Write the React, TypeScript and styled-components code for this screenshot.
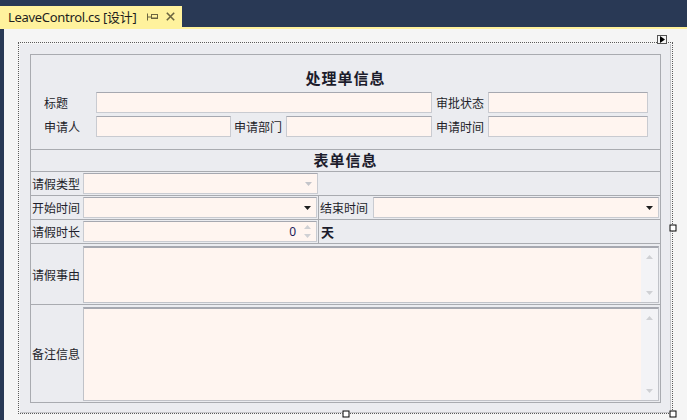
import styled, { createGlobalStyle } from 'styled-components';

const GlobalStyle = createGlobalStyle`
  html, body {
    margin: 0;
    padding: 0;
    background: #293955;
  }
  body {
    font-family: "Noto Sans CJK SC", "Noto Sans", sans-serif;
    color: #1e1e1e;
  }
`;

const Page = styled.div`
  width: 687px;
  height: 420px;
  display: flex;
  flex-direction: column;
  background: #293955;
  overflow: hidden;
`;

const TabStrip = styled.div`
  height: 21px;
  padding-top: 6px;
  display: flex;
`;

const Tab = styled.div`
  width: 182px;
  background: #fff29d;
  display: flex;
  align-items: center;
  padding-left: 8px;
  box-sizing: border-box;
  font-family: "Noto Sans", "Noto Sans CJK SC", sans-serif;
  font-size: 13px;
  color: #1e1e1e;
`;

const TabTitle = styled.span`
  letter-spacing: -0.3px;
  margin-top: -1px;
`;

const TabIcons = styled.div`
  display: flex;
  align-items: center;
  gap: 8px;
  margin-left: 11px;
`;

const YellowRule = styled.div`
  height: 2px;
  background: #fff29d;
`;

const Workspace = styled.div`
  flex: 1;
  margin-left: 4px;
  background: #f5f5f5;
  padding: 13px 0 0 14px;
`;

const SelectionFrame = styled.div`
  position: relative;
  width: 655px;
  height: 372px;
  box-sizing: border-box;
  border: 1px dotted #5a5a5a;
  padding: 1px 0 0 1px;
`;

const Handle = styled.div<{ $x: string; $y: string }>`
  position: absolute;
  width: 7px;
  height: 7px;
  box-sizing: border-box;
  background: #fff;
  border: 1px solid #000;
  left: ${({ $x }) => $x};
  top: ${({ $y }) => $y};
  transform: translate(-50%, -50%);
`;

const SmartTag = styled.div`
  position: absolute;
  right: 5px;
  top: -8px;
  width: 10px;
  height: 9px;
  box-sizing: border-box;
  border: 1px solid #555;
  background: #f5f5f5;
  display: flex;
  align-items: center;
  justify-content: center;
`;

const UserControl = styled.div`
  width: 651px;
  height: 369px;
  box-sizing: border-box;
  background: #ebecf0;
  border-right: 1px solid #c4c5c9;
  border-bottom: 1px solid #c4c5c9;
  padding: 10px 9px 9px 10px;
`;

const Group = styled.div`
  height: 100%;
  box-sizing: border-box;
  border: 1px solid #a9abb0;
  display: flex;
  flex-direction: column;
`;

const Section = styled.div<{ $h: number }>`
  height: ${({ $h }) => $h}px;
  box-sizing: border-box;
  border-bottom: 1px solid #a9abb0;
  flex: none;
`;

const HeaderSection = styled(Section)`
  padding-top: 14px;
  display: flex;
  flex-direction: column;
`;

const Title = styled.div<{ $top?: number }>`
  text-align: center;
  font-size: 15px;
  font-weight: 700;
  line-height: 18px;
  letter-spacing: 1px;
  color: #1c1c2c;
  margin-top: ${({ $top }) => $top ?? 0}px;
`;

const InfoRow = styled.div<{ $top: number }>`
  display: flex;
  align-items: center;
  height: 21px;
  padding-left: 13px;
  margin-top: ${({ $top }) => $top}px;
`;

const Label = styled.div<{ $w: number; $pad?: number }>`
  width: ${({ $w }) => $w}px;
  padding-left: ${({ $pad }) => $pad ?? 0}px;
  box-sizing: border-box;
  font-size: 12px;
  line-height: 16px;
  white-space: nowrap;
  flex: none;
  color: #1e1e2a;
`;

const TextBox = styled.div<{ $w?: number }>`
  width: ${({ $w }) => ($w ? `${$w}px` : 'auto')};
  flex: ${({ $w }) => ($w ? 'none' : 1)};
  height: 21px;
  box-sizing: border-box;
  background: #fff5f0;
  border: 1px solid #c9cbd1;
  border-top-color: #a6a8b0;
`;

const FormRow = styled(Section)`
  display: flex;
  align-items: stretch;
`;

const LabelCell = styled.div`
  width: 51px;
  flex: none;
  display: flex;
  align-items: center;
  padding-left: 1px;
  box-sizing: border-box;
  font-size: 12px;
  white-space: nowrap;
  color: #1e1e2a;
`;

const FieldCell = styled.div<{ $w?: number; $divider?: boolean }>`
  width: ${({ $w }) => ($w ? `${$w}px` : 'auto')};
  flex: ${({ $w }) => ($w ? 'none' : 1)};
  display: flex;
  align-items: center;
  padding: 0 1px;
  box-sizing: border-box;
  border-right: ${({ $divider }) => ($divider ? '1px solid #a9abb0' : 'none')};
`;

const SideLabel = styled(LabelCell)`
  width: 53px;
  padding-left: 1px;
`;

const Combo = styled.div`
  flex: 1;
  height: 21px;
  box-sizing: border-box;
  background: #fff5f0;
  border: 1px solid #c9cbd1;
  border-top-color: #a6a8b0;
  display: flex;
  align-items: center;
  justify-content: flex-end;
  padding-right: 5px;
`;

const Spin = styled(Combo)`
  padding-right: 3px;
  gap: 8px;
`;

const SpinValue = styled.span`
  font-size: 12px;
  color: #1a1a5a;
  font-family: "Noto Sans", sans-serif;
`;

const SpinArrows = styled.div`
  display: flex;
  flex-direction: column;
  gap: 5px;
  padding-right: 2px;
`;

const Unit = styled.div`
  padding-left: 2px;
  display: flex;
  align-items: center;
  font-size: 13px;
  font-weight: 700;
  color: #1c1c2c;
`;

const MemoRow = styled(FormRow)<{ $grow?: boolean }>`
  flex: ${({ $grow }) => ($grow ? 1 : 'none')};
  border-bottom: ${({ $grow }) => ($grow ? 'none' : '1px solid #a9abb0')};
`;

const MemoCell = styled.div`
  flex: 1;
  display: flex;
  padding: 2px 1px 1px 1px;
`;

const Memo = styled.div`
  flex: 1;
  box-sizing: border-box;
  background: #fff5f0;
  border: 1px solid #c0c2c8;
  border-top: 2px solid #a6a8b0;
  display: flex;
  justify-content: flex-end;
`;

const ScrollTrack = styled.div`
  width: 17px;
  background: #f3f3f6;
  display: flex;
  flex-direction: column;
  align-items: center;
  justify-content: space-between;
  padding: 7px 0 7px;
`;

const Arrow = ({ up, color }: { up?: boolean; color: string }) => (
  <svg width="7" height="4" viewBox="0 0 7 4">
    <path d={up ? 'M0 4 L3.5 0 L7 4 Z' : 'M0 0 L7 0 L3.5 4 Z'} fill={color} />
  </svg>
);

const PinIcon = () => (
  <svg width="11" height="8" viewBox="0 0 11 8">
    <g fill="none" stroke="#6b6540" strokeWidth="1">
      <path d="M0.5 0.5 V7.5" />
      <path d="M0.5 4 H4.5" />
      <rect x="4.5" y="1.5" width="6" height="4" />
      <path d="M4.5 5 H10.5" />
    </g>
  </svg>
);

const CloseIcon = () => (
  <svg width="9" height="9" viewBox="0 0 9 9">
    <path d="M0.8 0.8 L8.2 8.2 M8.2 0.8 L0.8 8.2" stroke="#6b6540" strokeWidth="1.6" />
  </svg>
);

const TagArrow = () => (
  <svg width="5" height="7" viewBox="0 0 5 7">
    <path d="M0 0 L5 3.5 L0 7 Z" fill="#000" />
  </svg>
);

function MemoField({ label, h, grow }: { label: string; h: number; grow?: boolean }) {
  return (
    <MemoRow $h={h} $grow={grow}>
      <LabelCell>{label}</LabelCell>
      <MemoCell>
        <Memo>
          <ScrollTrack>
            <Arrow up color="#cfd0d4" />
            <Arrow color="#cfd0d4" />
          </ScrollTrack>
        </Memo>
      </MemoCell>
    </MemoRow>
  );
}

export default function App() {
  return (
    <Page>
      <GlobalStyle />
      <TabStrip>
        <Tab>
          <TabTitle>LeaveControl.cs [设计]</TabTitle>
          <TabIcons>
            <PinIcon />
            <CloseIcon />
          </TabIcons>
        </Tab>
      </TabStrip>
      <YellowRule />
      <Workspace>
        <SelectionFrame>
          <SmartTag>
            <TagArrow />
          </SmartTag>
          <UserControl>
            <Group>
              <HeaderSection $h={95}>
                <Title>处理单信息</Title>
                <InfoRow $top={5}>
                  <Label $w={52}>标题</Label>
                  <TextBox $w={336} />
                  <Label $w={56} $pad={4}>审批状态</Label>
                  <TextBox $w={160} />
                </InfoRow>
                <InfoRow $top={3}>
                  <Label $w={52}>申请人</Label>
                  <TextBox $w={135} />
                  <Label $w={55} $pad={3}>申请部门</Label>
                  <TextBox $w={146} />
                  <Label $w={56} $pad={4}>申请时间</Label>
                  <TextBox $w={160} />
                </InfoRow>
              </HeaderSection>
              <Section $h={22}>
                <Title $top={1}>表单信息</Title>
              </Section>
              <FormRow $h={24}>
                <LabelCell>请假类型</LabelCell>
                <FieldCell $w={237}>
                  <Combo>
                    <Arrow color="#c4c5ca" />
                  </Combo>
                </FieldCell>
              </FormRow>
              <FormRow $h={24}>
                <LabelCell>开始时间</LabelCell>
                <FieldCell $w={237} $divider>
                  <Combo>
                    <Arrow color="#1e1e1e" />
                  </Combo>
                </FieldCell>
                <SideLabel>结束时间</SideLabel>
                <FieldCell>
                  <Combo>
                    <Arrow color="#1e1e1e" />
                  </Combo>
                </FieldCell>
              </FormRow>
              <FormRow $h={24}>
                <LabelCell>请假时长</LabelCell>
                <FieldCell $w={237} $divider>
                  <Spin>
                    <SpinValue>0</SpinValue>
                    <SpinArrows>
                      <Arrow up color="#cfd0d4" />
                      <Arrow color="#cfd0d4" />
                    </SpinArrows>
                  </Spin>
                </FieldCell>
                <Unit>天</Unit>
              </FormRow>
              <MemoField label="请假事由" h={61} />
              <MemoField label="备注信息" h={97} grow />
            </Group>
          </UserControl>
          <Handle $x="calc(100% + 1px)" $y="50%" />
          <Handle $x="50%" $y="calc(100% + 1px)" />
          <Handle $x="calc(100% + 1px)" $y="calc(100% + 1px)" />
        </SelectionFrame>
      </Workspace>
    </Page>
  );
}
